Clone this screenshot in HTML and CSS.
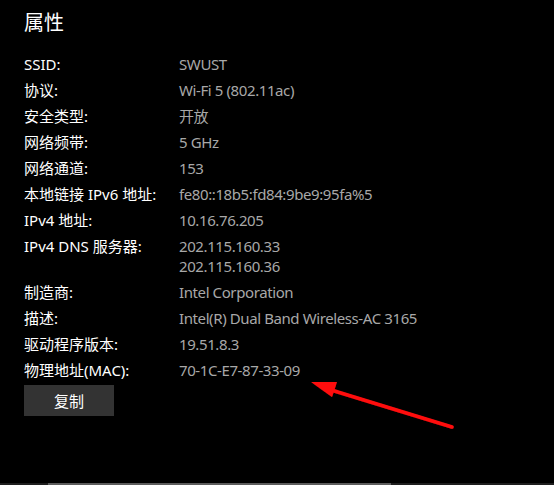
FILE: index.html
```html
<!DOCTYPE html>
<html lang="zh-CN">
<head>
<meta charset="utf-8">
<link rel="stylesheet" href="styles.css">
</head>
<body>
<main class="panel">
  <h1 class="title">属性</h1>
  <dl class="props">
    <dt>SSID:</dt><dd>SWUST</dd>
    <dt>协议:</dt><dd>Wi-Fi 5 (802.11ac)</dd>
    <dt>安全类型:</dt><dd>开放</dd>
    <dt>网络频带:</dt><dd>5 GHz</dd>
    <dt>网络通道:</dt><dd>153</dd>
    <dt>本地链接 IPv6 地址:</dt><dd>fe80::18b5:fd84:9be9:95fa%5</dd>
    <dt>IPv4 地址:</dt><dd>10.16.76.205</dd>
    <dt>IPv4 DNS 服务器:</dt><dd>202.115.160.33<br>202.115.160.36</dd>
    <dt>制造商:</dt><dd>Intel Corporation</dd>
    <dt>描述:</dt><dd>Intel(R) Dual Band Wireless-AC 3165</dd>
    <dt>驱动程序版本:</dt><dd>19.51.8.3</dd>
    <dt>物理地址(MAC):</dt><dd>70-1C-E7-87-33-09</dd>
  </dl>
  <button class="copy">复制</button>
</main>
<svg class="arrow" width="554" height="485" viewBox="0 0 554 485">
  <defs>
    <filter id="sh" x="-20%" y="-20%" width="140%" height="140%">
      <feDropShadow dx="1" dy="2" stdDeviation="1.5" flood-color="#000" flood-opacity="0.9"/>
    </filter>
  </defs>
  <g filter="url(#sh)" fill="#ff1010" stroke="none">
    <line x1="452" y1="427" x2="328" y2="389" stroke="#ff1010" stroke-width="3.5" stroke-linecap="round"/>
    <polygon points="311,382 337,382 332,397"/>
  </g>
</svg>
<div class="hscroll"><div class="thumb"></div></div>
</body>
</html>
```
FILE: styles.css
```css
html, body {
  margin: 0;
  padding: 0;
  background: #000;
  height: 100%;
  overflow: hidden;
}
body {
  font-family: "Noto Sans", "Noto Sans CJK SC", sans-serif;
  color: #fff;
  font-size: 15px;
}
.panel {
  padding: 9px 24px 0 24px;
}
.title {
  margin: 0;
  font-family: "Noto Sans CJK SC", sans-serif;
  font-weight: 400;
  font-size: 20px;
  line-height: 26px;
  color: #fff;
}
.props {
  display: grid;
  grid-template-columns: 155px auto;
  row-gap: 6px;
  margin: 19px 0 0 0;
  line-height: 20px;
  letter-spacing: -0.4px;
}
.props dt {
  margin: 0;
  color: #fff;
  letter-spacing: 0;
}
.props dd {
  margin: 0;
  color: #a8a8a8;
}
.copy {
  display: block;
  margin-top: 5px;
  width: 90px;
  height: 31px;
  border: none;
  background: #333333;
  color: #fff;
  font-family: "Noto Sans CJK SC", sans-serif;
  font-size: 15px;
  padding: 0;
}
.arrow {
  position: absolute;
  left: 0;
  top: 0;
  pointer-events: none;
}
.hscroll {
  position: fixed;
  left: 0;
  right: 0;
  bottom: 0;
  height: 2px;
  background: #1e1e1e;
}
.thumb {
  margin-left: 48px;
  width: 343px;
  height: 2px;
  background: #5c5c5c;
}
```
